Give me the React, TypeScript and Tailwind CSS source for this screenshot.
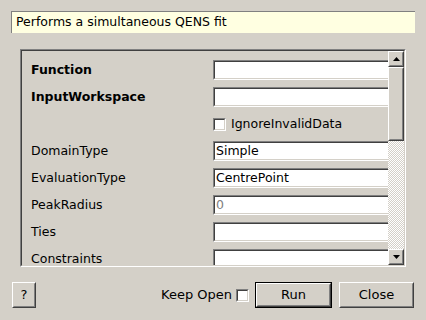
import React from "react";

const font = { fontFamily: '"DejaVu Sans", "Liberation Sans", sans-serif' };

// 2px sunken frame, used for the text boxes and checkboxes
const Sunken = ({ className = "", children }: { className?: string; children?: React.ReactNode }) => (
  <div className={`border border-t-[#808080] border-l-[#808080] border-b-white border-r-white ${className}`}>
    <div className="h-full w-full border border-t-[#404040] border-l-[#404040] border-b-[#d4d0c8] border-r-[#d4d0c8] bg-white">
      {children}
    </div>
  </div>
);

const Raised = ({ className = "", children }: { className?: string; children?: React.ReactNode }) => (
  <div className={`border border-t-white border-l-white border-b-[#404040] border-r-[#404040] ${className}`}>
    <div className="flex h-full w-full items-center justify-center border border-t-[#d4d0c8] border-l-[#d4d0c8] border-b-[#808080] border-r-[#808080] bg-[#d4d0c8]">
      {children}
    </div>
  </div>
);

const Check = () => <Sunken className="h-[13px] w-[13px]" />;

const Arrow = ({ down }: { down?: boolean }) => (
  <svg width="7" height="4" viewBox="0 0 7 4">
    {down ? <polygon points="0,0 7,0 3.5,4" fill="#000" /> : <polygon points="0,4 7,4 3.5,0" fill="#000" />}
  </svg>
);

const rows = [
  { label: "Function", bold: true, value: "" },
  { label: "InputWorkspace", bold: true, value: "" },
  { label: "", check: "IgnoreInvalidData" },
  { label: "DomainType", value: "Simple" },
  { label: "EvaluationType", value: "CentrePoint" },
  { label: "PeakRadius", value: "0", muted: true },
  { label: "Ties", value: "" },
  { label: "Constraints", value: "" },
];

export default function App() {
  return (
    <div className="flex h-[320px] w-[426px] flex-col overflow-hidden bg-[#d4d0c8] text-[12.5px] text-black" style={font}>
      {/* description */}
      <div className="mx-[11px] mt-[11px] flex h-[22px] items-center border-t border-l border-[#808080] bg-[#ffffe1] pl-[4px]">
        Performs a simultaneous QENS fit
      </div>

      {/* property panel */}
      <div className="ml-[20px] mt-[16px] h-[218px] w-[386px] border border-t-[#808080] border-l-[#808080] border-b-white border-r-white">
        <div className="flex h-full w-full border border-t-[#404040] border-l-[#404040] border-b-[#d4d0c8] border-r-[#d4d0c8]">
          <div className="flex-1 overflow-hidden pl-[9px] pt-[9px]">
            <div className="flex flex-col gap-[7px]">
              {rows.map((r, i) => (
                <div key={i} className="flex h-[20px] items-center">
                  <div className={`w-[182px] shrink-0 ${r.bold ? "font-bold" : ""}`}>{r.label}</div>
                  {r.check ? (
                    <div className="flex items-center gap-[5px]">
                      <Check />
                      <span>{r.check}</span>
                    </div>
                  ) : (
                    <Sunken className="h-[20px] w-[200px] shrink-0">
                      <div className={`flex h-full items-center pl-[1px] ${r.muted ? "text-[#808080]" : ""}`}>{r.value}</div>
                    </Sunken>
                  )}
                </div>
              ))}
            </div>
          </div>

          {/* scrollbar */}
          <div className="flex w-[16px] flex-col">
            <Raised className="h-[16px] w-[16px]">
              <Arrow />
            </Raised>
            <Raised className="h-[74px] w-[16px]" />
            <div className="flex-1 bg-[repeating-conic-gradient(#ffffff_0_25%,#d4d0c8_0_50%)] bg-[length:2px_2px]" />
            <Raised className="h-[16px] w-[16px]">
              <Arrow down />
            </Raised>
          </div>
        </div>
      </div>

      {/* buttons */}
      <div className="mt-[15px] flex items-center pl-[12px] pr-[12px] text-[13px]">
        <Raised className="h-[26px] w-[24px]">?</Raised>
        <div className="flex-1" />
        <span className="mr-[4px]">Keep Open</span>
        <Check />
        <div className="ml-[6px] h-[26px] w-[77px] border border-black">
          <Raised className="h-full w-full">Run</Raised>
        </div>
        <Raised className="ml-[7px] h-[26px] w-[75px]">Close</Raised>
      </div>
    </div>
  );
}
